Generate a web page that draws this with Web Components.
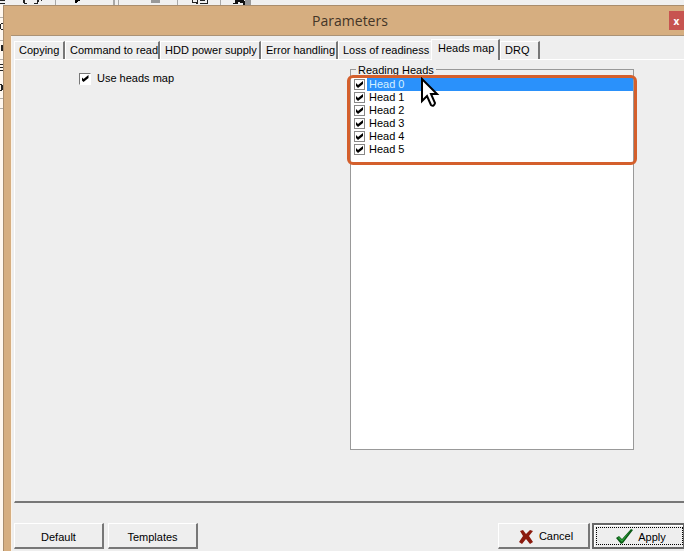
<!DOCTYPE html>
<html lang="en">
<head>
<meta charset="utf-8">
<title>Parameters</title>
<style>
    body { margin: 0; overflow: hidden; background: #f0f0f0; color: #000; font: 11px/13px "Liberation Sans", Arial, sans-serif; }
</style>
</head>
<body>
<app-backdrop>
    <param-window heading="Parameters">
        <tab-strip slot="tabs" active="Heads map"></tab-strip>
        <heads-pane slot="pane"></heads-pane>
        <push-button slot="left" label="Default"></push-button>
        <push-button slot="left" label="Templates"></push-button>
        <push-button slot="right" label="Cancel" icon="cross"></push-button>
        <push-button slot="right" label="Apply" icon="check" focused></push-button>
    </param-window>
</app-backdrop>

<script>
// the main program's toolbar and side panel, showing behind the dialog
class AppBackdrop extends HTMLElement {
    constructor(){
        super();
        this.attachShadow({ mode: "open" });
    }
    connectedCallback(){
        this.shadowRoot.innerHTML = `
            <style>
                :host { display: grid; grid-template: 5px minmax(0, 1fr) / 3px minmax(0, 1fr); height: 100vh; }
                svg { display: block; overflow: hidden; }
                .bar { grid-column: 1 / 3; background: #f0f0f0; overflow: hidden; }
                .side { overflow: hidden; background: #fff8f0; }
            </style>
            <div class="bar">
                <svg width="270" height="5" shape-rendering="crispEdges" aria-hidden="true">
                    <path d="M0 0h5v1H0zM0 3h5v1H0z" fill="#222"/>
                    <path d="M23 0h2v3h2v1h-3v-1h-1zM34 3h2v1h-2zM37 0h2v2h-1v2h-3v-1h2zM41 0h1v1h-1z" fill="#222"/>
                    <path d="M75 0h5v1h-2v1h-1v1h-2z" fill="#000"/>
                    <path d="M55 0h1v5h-1zM113 0h2v5h-2zM118 0h1v5h-1zM177 0h1v5h-1zM220 0h1v5h-1z" fill="#a8a8a8"/>
                    <path d="M151 0h9v3h-9zM245 0h6v5h-6z" fill="#999"/>
                    <path d="M192 0h1v2h4v2h-1v-1h-4zM197 0h1v4h-1zM200 0h5v1h-5zM200 3h8v1h-8zM207 0h1v4h-1z" fill="#222"/>
                    <path d="M235 0h5v2h-2v2h-5v-1h2zM240 0h4v1h1v4h-2v-2h-3z" fill="#111"/>
                </svg>
            </div>
            <div class="side">
                <svg width="3" height="120" shape-rendering="crispEdges" aria-hidden="true">
                    <path d="M0 12h3v1H0zM0 35h3v1H0zM0 54h3v1H0zM0 93h3v1H0zM0 103h3v1H0z" fill="#b5b0aa"/>
                    <path d="M1 18h2v1H1zM0 19h1v5H0zM1 24h2v1H1zM1 40h2v6H1zM0 59h3v1H0zM0 62h3v1H0zM0 65h3v1H0zM0 79h2v1H0zM1 80h2v5H1zM0 85h2v1H0z" fill="#222"/>
                </svg>
            </div>
            <slot></slot>
        `;
    }
}

class ParamWindow extends HTMLElement {
    constructor(){
        super();
        this.attachShadow({ mode: "open" });
    }
    connectedCallback(){
        this.shadowRoot.innerHTML = `
            <style>
                :host { display: flex; flex-direction: column; min-width: 0; box-sizing: border-box; padding-left: 7px; border: solid #a98d6d; border-width: 1px 0 0 1px; background: #d6ae80; }
                header { display: flex; align-items: center; height: 29px; padding-left: 20px; border-bottom: 1px solid #aa9276; }
                h1 { flex: 1; margin: 0; text-align: center; color: #443527; font: 14px/20px "Open Sans", "Noto Sans", sans-serif; }
                .close { width: 15px; height: 19px; padding: 0; border: 0; background: #c75450; color: #fff; font: bold 10px/16px "Open Sans", sans-serif; }
                .client { flex: 1; display: flex; flex-direction: column; min-height: 0; padding: 3px 0 2px 2px; border-left: 1px solid #fbf3e9; background: #eee; }
                ::slotted([slot="pane"]) { flex: 1; }
                footer { display: flex; justify-content: space-between; padding-top: 20px; }
                .group { display: flex; gap: 4px; }
                .right { gap: 2px; }
            </style>
            <header>
                <h1>${this.getAttribute("heading")}</h1>
                <button class="close" aria-label="Close">x</button>
            </header>
            <div class="client">
                <slot name="tabs"></slot>
                <slot name="pane"></slot>
                <footer>
                    <div class="group"><slot name="left"></slot></div>
                    <div class="group right"><slot name="right"></slot></div>
                </footer>
            </div>
        `;
    }
}

class TabStrip extends HTMLElement {
    constructor(){
        super();
        this.attachShadow({ mode: "open" });
    }
    connectedCallback(){
        const names = ["Copying", "Command to read", "HDD power supply", "Error handling", "Loss of readiness", "Heads map", "DRQ"];
        const active = this.getAttribute("active");
        this.shadowRoot.innerHTML = `
            <style>
                :host { display: grid; grid-template-columns: 51px 95px 101px 77px 93px 69px 40px; align-items: end; height: 20px; }
                button { height: 18px; padding: 0 0 1px 4px; border: solid; border-width: 1px 2px 0 1px; border-color: #fff #777 #fff #fff; background: #eee; color: inherit; font: inherit; text-align: left; white-space: nowrap; }
                .before { border-right: 0; }
                button:first-child, .on { padding-left: 6px; }
                .on { position: relative; height: 21px; margin-bottom: -1px; padding-bottom: 4px; }
            </style>
            ${names.map((name, i) => `<button role="tab" aria-selected="${name === active}" class="${name === active ? "on" : names[i + 1] === active ? "before" : ""}">${name}</button>`).join("")}
        `;
    }
}

class TickBox extends HTMLElement {
    constructor(){
        super();
        this.attachShadow({ mode: "open" });
    }
    connectedCallback(){
        this.shadowRoot.innerHTML = `
            <style>
                :host { display: block; }
                label { display: flex; align-items: center; }
                input { appearance: none; display: grid; place-items: center; flex: none; box-sizing: border-box; width: 12px; height: 12px; margin: 0; border: 1px solid; border-color: #777 #fff #fff #777; background: #fff; }
                input:checked::before { content: ""; width: 7px; height: 7px; background: #000; clip-path: polygon(0 2px, 2px 4px, 7px 0, 7px 3px, 2px 7px, 0 5px); }
                span { padding-left: 6px; }
                :host([flat]) input { border-color: #888; height: 11px; width: 11px; }
                :host([flat]) span { flex: 1; margin-left: 2px; padding-left: 2px; }
                :host([selected]) span { background: #2a91fb; color: #d5f0ff; }
            </style>
            <label><input type="checkbox" checked><span>${this.getAttribute("label")}</span></label>
        `;
    }
}

class HeadsPane extends HTMLElement {
    constructor(){
        super();
        this.attachShadow({ mode: "open" });
    }
    connectedCallback(){
        let rows = "";
        for (let i = 0; i < 6; i++) {
            rows += `<tick-box flat label="Head ${i}" ${i === 0 ? "selected" : ""}></tick-box>`;
        }
        this.shadowRoot.innerHTML = `
            <style>
                :host { display: grid; grid-template-columns: minmax(0, 1fr) 284px; box-sizing: border-box; padding: 9px 50px 51px 0; border: solid; border-width: 1px 0 2px 1px; border-color: #fff #fff #777 #fff; background: #eee; }
                .options { padding: 3px 0 0 64px; }
                .reading { position: relative; display: flex; flex-direction: column; border: 1px solid #999; }
                h2 { align-self: flex-start; height: 13px; margin: -6px 0 0 5px; padding: 0 2px; background: #eee; font: inherit; }
                .list { flex: 1; padding: 1px 0 0 3px; background: #fff; }
                .mark { position: absolute; left: -4px; right: -4px; top: 5px; height: 84px; border: 3px solid #d45f2c; border-radius: 6px; }
                .cursor { position: absolute; left: 69px; top: 7px; }
            </style>
            <div class="options"><tick-box label="Use heads map"></tick-box></div>
            <div class="reading" role="group" aria-labelledby="title">
                <h2 id="title">Reading Heads</h2>
                <div class="list">${rows}</div>
                <div class="mark"></div>
                <svg class="cursor" width="20" height="32" viewBox="0 0 20 32" aria-hidden="true">
                    <path d="M2 2V24L7 19L11 28Q14 30 15 26L11 17H17Z" fill="#fff" stroke="#000" stroke-width="2"/>
                </svg>
            </div>
        `;
    }
}

class PushButton extends HTMLElement {
    constructor(){
        super();
        this.attachShadow({ mode: "open" });
    }
    getIcon() {
        const icons = {
            cross: `<svg width="15" height="16" viewBox="0 0 15 16" aria-hidden="true"><path d="M1 2L4 1L7 5L11 1L14 2L10 7L14 13L11 15L7 10L3 15L0 13L4 7Z" fill="#8b1a0e"/></svg>`,
            check: `<svg width="17" height="16" viewBox="0 0 17 16" aria-hidden="true"><path d="M0 9L3 7L6 10L15 0L17 1L7 14L5 15Z" fill="#0b5a16"/><path d="M2 9L3 8L6 11L15 1L6 13Z" fill="#2fa53b"/></svg>`
        };
        return icons[this.getAttribute("icon")] || "";
    }
    connectedCallback(){
        this.shadowRoot.innerHTML = `
            <style>
                :host { display: block; }
                button { position: relative; display: flex; align-items: center; justify-content: center; gap: 5px; box-sizing: border-box; width: 90px; height: 26px; padding: 3px 0 0; border: solid; border-width: 1px 2px 2px 1px; border-color: #fff #777 #777 #fff; background: #eee; color: inherit; font: inherit; }
                :host([icon]) button { width: 92px; padding: 2px 0 0 5px; }
                :host([focused]) button { border: 2px solid #666; border-right-width: 1px; box-shadow: inset 1px 1px #fff; }
                :host([focused]) button::after { content: ""; position: absolute; inset: 2px 0 2px 2px; border: 1px dotted #000; }
            </style>
            <button>${this.getIcon()}<span>${this.getAttribute("label")}</span></button>
        `;
    }
}

customElements.define("app-backdrop", AppBackdrop);
customElements.define("param-window", ParamWindow);
customElements.define("tab-strip", TabStrip);
customElements.define("tick-box", TickBox);
customElements.define("heads-pane", HeadsPane);
customElements.define("push-button", PushButton);
</script>
</body>
</html>
